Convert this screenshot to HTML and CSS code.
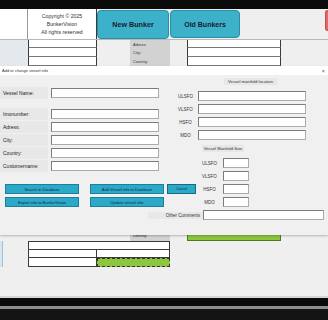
FILE: index.html
```html
<!DOCTYPE html>
<html lang="en">
<head>
    <meta charset="UTF-8">
    <meta name="viewport" content="width=device-width, initial-scale=1.0">
    <title>BunkerVision</title>
    <link rel="stylesheet" href="styles.css">
</head>
<body>
    <div class="topbar"></div>

    <div class="page">
        <!-- Sheet behind the form -->
        <div class="row header">
            <div class="cell white w28 bordered-r"></div>
            <div class="cell white w69 bordered-r copyright">Copyright © 2025<br>BunkerVision<br>All rights reserved</div>
            <div class="header-buttons">
                <div class="shape-btn new">New Bunker</div>
                <div class="shape-btn old">Old Bunkers</div>
                <div class="shape-btn red"></div>
            </div>
        </div>

        <div class="row h8">
            <div class="cell blue w28"></div>
            <div class="cell white w69 grid-cell"></div>
            <div class="cell w33"></div>
            <div class="cell label w40">Adress:</div>
            <div class="cell w17"></div>
            <div class="cell white w94 grid-cell"></div>
        </div>
        <div class="row h9">
            <div class="cell blue w28"></div>
            <div class="cell white w69 grid-cell"></div>
            <div class="cell w33"></div>
            <div class="cell label w40">City:</div>
            <div class="cell w17"></div>
            <div class="cell white w94 grid-cell"></div>
        </div>
        <div class="row h9">
            <div class="cell blue w28"></div>
            <div class="cell white w69 grid-cell"></div>
            <div class="cell w33"></div>
            <div class="cell label w40">Country:</div>
            <div class="cell w17"></div>
            <div class="cell white w94 grid-cell"></div>
        </div>

        <div class="spacer"></div>

        <div class="row h11">
            <div class="cell w28"></div>
            <div class="cell w69"></div>
            <div class="cell w33"></div>
            <div class="cell label w40">Density:</div>
            <div class="cell w17"></div>
            <div class="cell green w94"></div>
        </div>
        <div class="row h9">
            <div class="cell strip w28"><span></span></div>
            <div class="cell white w142 box top"></div>
        </div>
        <div class="row h8">
            <div class="cell strip w28"><span></span></div>
            <div class="cell white w69 box"></div>
            <div class="cell white w73 box"></div>
        </div>
        <div class="row h9">
            <div class="cell strip w28"><span></span></div>
            <div class="cell white w69 box"></div>
            <div class="cell selected w73"></div>
        </div>

        <!-- Userform -->
        <div class="dialog">
            <div class="dialog-title">
                <span>Add or change vessel info</span>
                <span class="close">×</span>
            </div>
            <div class="dialog-body">
                <div class="dialog-main">
                    <div class="form-left">
                        <div class="field first"><label>Vessel Name:</label><input type="text"></div>
                        <div class="field second"><label>Imonumber:</label><input type="text"></div>
                        <div class="field"><label>Adress:</label><input type="text"></div>
                        <div class="field"><label>City:</label><input type="text"></div>
                        <div class="field"><label>Country:</label><input type="text"></div>
                        <div class="field"><label>Customername:</label><input type="text"></div>

                        <div class="actions">
                            <button>Search in Database</button>
                            <button>Add Vessel info to Database</button>
                            <button>Export info to BunkerVision</button>
                            <button>Update vessel info</button>
                        </div>
                    </div>

                    <div class="form-right">
                        <div class="section-title loc-title">Vessel manifold location</div>
                        <div class="loc-grid">
                            <label>ULSFO</label><input type="text">
                            <label>VLSFO</label><input type="text">
                            <label>HSFO</label><input type="text">
                            <label>MDO</label><input type="text">
                        </div>

                        <div class="section-title size-title">Vessel Manifold Size</div>
                        <div class="size-grid">
                            <span></span><label>ULSFO</label><input type="text">
                            <span></span><label>VLSFO</label><input type="text">
                            <button class="cancel">Cancel</button><label>HSFO</label><input type="text">
                            <span></span><label>MDO</label><input type="text">
                        </div>
                    </div>
                </div>

                <div class="comments">
                    <label>Other Comments</label>
                    <input type="text">
                </div>
            </div>
        </div>
    </div>

    <div class="footer">
        <div class="f-light"></div>
        <div class="f-black"></div>
        <div class="f-grey"></div>
        <div class="f-dark"></div>
    </div>
</body>
</html>
```

FILE: styles.css
```css
/* Global styles */
html, body {
    height: 100%;
    margin: 0;
    padding: 0;
    overflow: hidden;
    font-family: 'Liberation Sans', Arial, sans-serif;
    color: #222;
}

body {
    background-color: #efefef;
}

.topbar {
    height: 9px;
    background-color: #0b0b0b;
}

.page {
    position: relative;
    height: 287px;
    overflow: hidden;
}

/* Sheet rows */
.row {
    display: flex;
}

.row.header { height: 31px; border-bottom: 1px solid #b8b8b8; box-sizing: border-box; }
.h8 { height: 8px; }
.h9 { height: 9px; }
.h11 { height: 11px; }

.spacer {
    height: 164px;
}

.cell {
    box-sizing: border-box;
    flex: none;
    height: 100%;
}

.w17 { width: 17px; }
.w28 { width: 28px; }
.w33 { width: 33px; }
.w40 { width: 40px; }
.w69 { width: 69px; }
.w73 { width: 73px; }
.w94 { width: 94px; }
.w142 { width: 142px; }

.white {
    background-color: #fff;
}

.bordered-r {
    border-right: 1px solid #3a3a3a;
}

.w28.bordered-r {
    border-right-color: #9a9a9a;
}

.grid-cell {
    border-left: 1px solid #3a3a3a;
    border-right: 1px solid #3a3a3a;
    border-bottom: 1px solid #777;
}

.blue {
    background-color: #e3e9ed;
}

.label {
    background-color: #d2d2d2;
    font-size: 4px;
    color: #333;
    padding-left: 3px;
    display: flex;
    align-items: center;
}

.copyright {
    font-size: 5.2px;
    line-height: 8px;
    text-align: center;
    display: flex;
    align-items: center;
    justify-content: center;
    color: #333;
}

.header-buttons {
    flex: 1;
    display: flex;
    gap: 1px;
    padding-top: 1px;
    min-width: 0;
}

.shape-btn {
    box-sizing: border-box;
    height: 29px;
    border-radius: 4px;
    background-color: #3cb1c9;
    border: 1px solid #2b8ea6;
    color: #15212e;
    font-weight: bold;
    font-size: 7.2px;
    display: flex;
    align-items: center;
    justify-content: center;
    flex: none;
}

.shape-btn.new { width: 72px; }
.shape-btn.old { width: 70px; height: 28px; font-size: 7px; }

.shape-btn.red {
    width: 3px;
    height: 21px;
    margin-left: auto;
    border-radius: 3px 0 0 3px;
    border-right: none;
    background-color: #e46a6a;
    border-color: #c24f4f;
}

.green {
    background-color: #8cc63f;
    border: 1px solid #4f7a25;
}

.strip span {
    display: block;
    width: 3px;
    height: 100%;
    background-color: #d5e8f1;
    border-right: 1px solid #9fc2d2;
    box-sizing: border-box;
}

.box {
    border-left: 1px solid #3a3a3a;
    border-right: 1px solid #3a3a3a;
    border-bottom: 1px solid #3a3a3a;
}

.box.top {
    border-top: 1px solid #3a3a3a;
}

.box + .box {
    border-left: none;
}

.selected {
    background-color: #8cc63f;
    border: 1px dashed #333;
}

/* Userform */
.dialog {
    position: absolute;
    top: 57px;
    left: 0;
    width: 328px;
    height: 169px;
    background-color: #f0f0f0;
    box-shadow: 0 1px 2px rgba(0, 0, 0, 0.25);
    font-size: 5px;
}

.dialog-title {
    height: 9px;
    background-color: #fff;
    display: flex;
    align-items: center;
    justify-content: space-between;
    padding: 0 3px 0 2px;
    font-size: 4px;
    color: #333;
}

.dialog-title .close {
    font-size: 6px;
    color: #666;
}

.dialog-body {
    height: 160px;
}

.dialog-main {
    display: flex;
}

.dialog input {
    box-sizing: border-box;
    height: 10px;
    margin: 0;
    padding: 0;
    background-color: #fff;
    border: 1px solid #ababab;
    border-top-color: #7c7c7c;
    border-left-color: #7c7c7c;
    outline: none;
}

.dialog button {
    box-sizing: border-box;
    height: 10px;
    margin: 0;
    padding: 0;
    background-color: #2aa9c9;
    border: 1px solid #1d7f99;
    color: #1a2838;
    font-family: 'Liberation Sans', Arial, sans-serif;
    font-size: 4px;
}

.form-left {
    width: 165px;
}

.field {
    display: flex;
    align-items: center;
    height: 12px;
    margin-top: 1px;
}

.field.first { margin-top: 12px; }
.field.second { margin-top: 9px; }

.field label {
    box-sizing: border-box;
    width: 48px;
    height: 12px;
    padding-left: 3px;
    background-color: #e8e8e8;
    display: flex;
    align-items: center;
}

.field input {
    width: 108px;
    margin-left: 3px;
}

.actions {
    display: grid;
    grid-template-columns: 74px 74px;
    column-gap: 11px;
    row-gap: 3px;
    margin: 12px 0 0 5px;
}

.form-right {
    flex: 1;
}

.section-title {
    height: 7px;
    font-size: 4.2px;
    background-color: #e7e7e7;
    display: flex;
    align-items: center;
    justify-content: center;
    color: #333;
}

.loc-title {
    width: 53px;
    margin: 3px 0 0 59px;
}

.loc-grid {
    display: grid;
    grid-template-columns: 25px 108px;
    row-gap: 3px;
    margin: 6px 0 0 8px;
}

.loc-grid label,
.size-grid label {
    font-size: 4.5px;
    display: flex;
    align-items: center;
    justify-content: center;
    color: #333;
}

.size-title {
    width: 42px;
    margin: 5px 0 0 37px;
}

.size-grid {
    display: grid;
    grid-template-columns: 29px 21px 26px;
    grid-auto-rows: 10px;
    column-gap: 3px;
    row-gap: 3px;
    margin: 6px 0 0 2px;
}

.size-grid input {
    width: 26px;
}

.dialog .cancel {
    font-size: 3.6px;
    border-color: #176a80;
}

.comments {
    display: flex;
    align-items: center;
    height: 10px;
    margin: 3px 0 0 148px;
}

.comments label {
    box-sizing: border-box;
    width: 55px;
    height: 7px;
    padding-right: 3px;
    background-color: #e8e8e8;
    font-size: 4.5px;
    display: flex;
    align-items: center;
    justify-content: flex-end;
    color: #333;
}

.comments input {
    width: 121px;
}

/* Bottom of the window */
.footer .f-light { height: 2px; background-color: #d6d6d6; }
.footer .f-black { height: 8px; background-color: #0a0a0a; }
.footer .f-grey { height: 3px; background-color: #8c8c8c; }
.footer .f-dark { height: 11px; background-color: #141414; }
```
